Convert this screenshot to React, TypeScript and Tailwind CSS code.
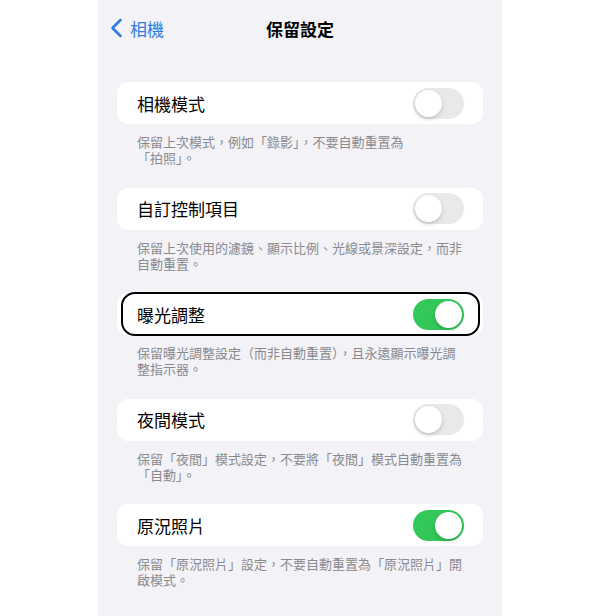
import React from "react";

type Setting = {
  title: string;
  lines: string[];
  on: boolean;
  highlight?: boolean;
};

const settings: Setting[] = [
  { title: "相機模式", lines: ["保留上次模式，例如「錄影」，不要自動重置為", "「拍照」。"], on: false },
  { title: "自訂控制項目", lines: ["保留上次使用的濾鏡、顯示比例、光線或景深設定，而非", "自動重置。"], on: false },
  { title: "曝光調整", lines: ["保留曝光調整設定（而非自動重置），且永遠顯示曝光調", "整指示器。"], on: true, highlight: true },
  { title: "夜間模式", lines: ["保留「夜間」模式設定，不要將「夜間」模式自動重置為", "「自動」。"], on: false },
  { title: "原況照片", lines: ["保留「原況照片」設定，不要自動重置為「原況照片」開", "啟模式。"], on: true },
];

function Toggle({ on }: { on: boolean }) {
  return (
    <div
      className={`relative w-[51px] h-[31px] rounded-full ${on ? "bg-[#34c759]" : "bg-[#e9e9eb]"}`}
    >
      <div
        className={`absolute top-[2px] w-[27px] h-[27px] rounded-full bg-white shadow-[0_2px_4px_rgba(0,0,0,0.18)] ${
          on ? "left-[22px]" : "left-[2px]"
        }`}
      />
    </div>
  );
}

function SettingSection({ s }: { s: Setting }) {
  return (
    <div className="flex flex-col">
      <div className="relative mx-[19px] h-[42px] rounded-[11px] bg-white flex items-center justify-between pl-[20px] pr-[19px]">
        <span className="text-[17px] text-black leading-none">{s.title}</span>
        <Toggle on={s.on} />
        {s.highlight && (
          <div className="absolute left-[4px] right-[3px] top-[-1px] bottom-[-1px] rounded-[14px] border-2 border-black pointer-events-none" />
        )}
      </div>
      <div className="mt-[10px] pl-[39px] text-[13px] leading-[16px] text-[#8a8a8e] whitespace-nowrap">
        <p>{s.lines[0]}</p>
        <p>{s.lines[1]}</p>
      </div>
    </div>
  );
}

export default function App() {
  return (
    <div
      className="w-[600px] h-[616px] bg-white flex justify-center overflow-hidden"
      style={{ fontFamily: '"Noto Sans CJK TC", "Noto Sans", sans-serif' }}
    >
      <div className="w-[404px] h-full bg-[#f2f2f7] flex flex-col">
        <div className="relative h-[56px] flex items-center justify-center">
          <div className="absolute left-[12px] top-0 h-full flex items-center gap-[7px] text-[#2f7ce0]">
            <svg width="13" height="20" viewBox="0 0 13 20" fill="none">
              <path d="M10.5 2 L2.5 10 L10.5 18" stroke="currentColor" strokeWidth="2.6" strokeLinecap="round" strokeLinejoin="round" />
            </svg>
            <span className="text-[17px] leading-none">相機</span>
          </div>
          <span className="text-[17px] font-semibold text-black leading-none">保留設定</span>
        </div>
        <div className="mt-[26px] flex flex-col gap-[21.5px]">
          {settings.map((s) => (
            <SettingSection key={s.title} s={s} />
          ))}
        </div>
      </div>
    </div>
  );
}
